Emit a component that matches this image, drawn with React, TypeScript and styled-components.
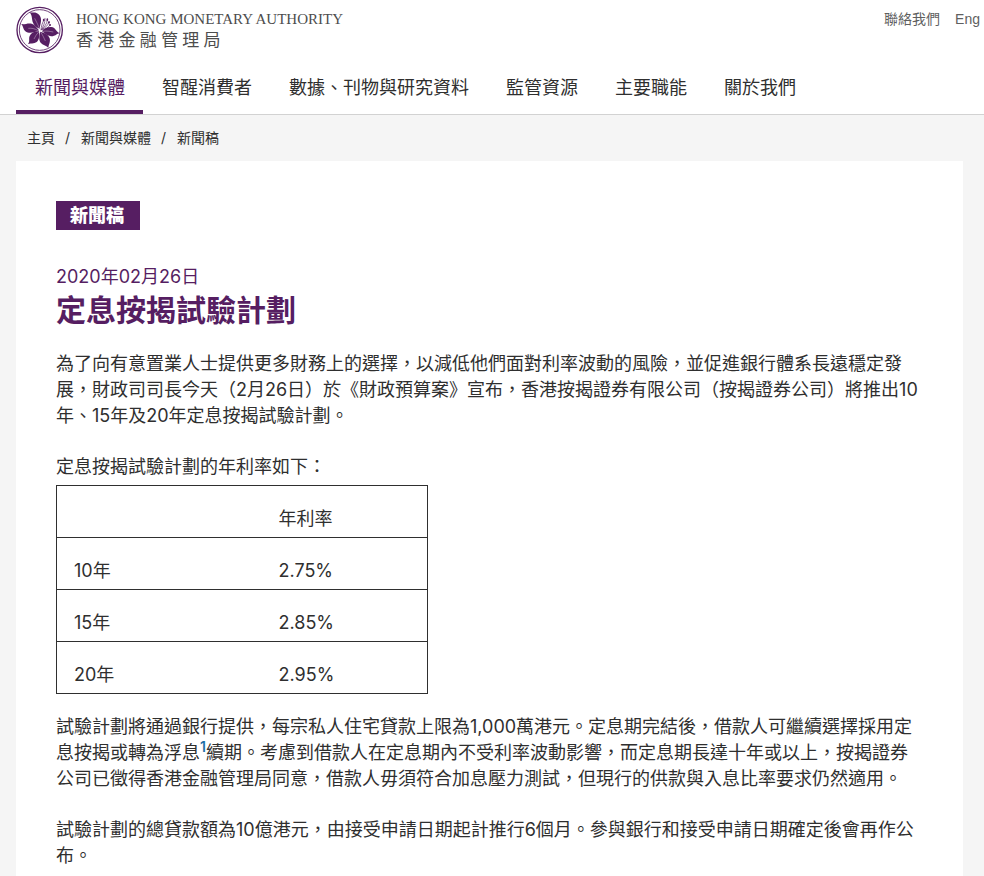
import React from 'react';
import styled, { createGlobalStyle } from 'styled-components';

const purple = '#561e62';
const ink = '#2f2f2f';

const GlobalStyle = createGlobalStyle`
  *, *::before, *::after { box-sizing: border-box; }
  body {
    margin: 0;
    background: #f5f5f5;
    color: ${ink};
    font-family: Inter, "Noto Sans CJK TC", sans-serif;
    font-size: 18px;
    line-height: 26px;
  }
  a { color: inherit; text-decoration: none; }
  h1, p { margin: 0; }
`;

const Header = styled.header`
  background: #fff;
  border-bottom: 1px solid #d2d2d2;
`;

const TopBar = styled.div`
  display: flex;
  justify-content: space-between;
  align-items: flex-start;
  padding: 6px 4px 8px 16px;
`;

const Brand = styled.a`
  display: flex;
  align-items: center;
  gap: 12px;
`;

const BrandName = styled.span`
  display: flex;
  flex-direction: column;
  gap: 2px;
  color: #4d4d4d;
  font-family: "Liberation Serif", "Noto Sans CJK TC", serif;
  font-size: 15px;
  line-height: 20px;
`;

const BrandChinese = styled.span`
  font-size: 17px;
`;

const Utility = styled.nav`
  display: flex;
  gap: 15px;
  color: #5f5f5f;
  font-family: "Liberation Sans", "Noto Sans CJK TC", sans-serif;
  font-size: 14px;
`;

const MainNav = styled.nav`
  display: flex;
  padding: 0 16px;
`;

const NavLink = styled.a<{ $active?: boolean }>`
  padding: 13px 18px 9px 19px;
  border-bottom: 4px solid ${(p) => (p.$active ? purple : 'transparent')};
  color: ${(p) => (p.$active ? purple : ink)};
`;

const Breadcrumb = styled.ol`
  display: flex;
  margin: 0;
  padding: 10px 27px;
  list-style: none;
  font-size: 14px;
  line-height: 26px;
`;

const Crumb = styled.li`
  display: flex;

  & + &::before {
    content: '/';
    margin: 0 11px 0 10px;
  }
`;

const Card = styled.main`
  margin: 0 21px 0 16px;
  padding: 40px;
  background: #fff;
`;

const Tag = styled.span`
  display: inline-block;
  padding: 0 16px 0 14px;
  background: ${purple};
  color: #fff;
  font-weight: 900;
  line-height: 29px;
  vertical-align: top;
`;

const ReleaseDate = styled.p`
  margin-top: 34px;
  color: ${purple};
`;

const Title = styled.h1`
  margin-bottom: 21px;
  color: ${purple};
  font-size: 30px;
  line-height: 40px;
`;

const Paragraph = styled.p`
  margin-bottom: 25px;
`;

const TableIntro = styled.p`
  margin-bottom: 5px;
`;

const RateTable = styled.table`
  width: 372px;
  max-width: 100%;
  margin-bottom: 20px;
  border: 1px solid ${ink};
  border-collapse: collapse;
  table-layout: fixed;
`;

const Row = styled.tr`
  border-top: 1px solid ${ink};
`;

const cell = `
  padding: 20px 17px 5px;
  font-weight: 400;
  text-align: left;
`;

const TermCell = styled.th`
  ${cell}
  width: 205px;
`;

const RateCell = styled.td`
  ${cell}
`;

const Footnote = styled.sup`
  color: #1f6fa5;
  font-size: 14px;
  font-weight: 600;
  line-height: 0;
`;

const Emblem = () => (
  <svg width="48" height="48" viewBox="0 0 144 144" aria-hidden="true">
    <g fill="none" stroke={purple}>
      <circle cx="71" cy="72" r="68" strokeWidth="4" />
      <circle cx="71" cy="72" r="61" strokeWidth="2.5" />
    </g>
    <g fill={purple}>
      <path d="M41 19c8 2 15-1 22 3 10 5 13 14 12 24-1 8-3 14-4 22-9-3-18-10-21-20-3-11-1-19-9-29z" />
      <path d="M69 73c-6-8-12-17-22-20-12-3-20 3-31 1 6 7 5 16 12 22 12 9 28 3 41-3z" />
      <path d="M69 76c-13-1-24 5-28 14-4 9 2 15-5 24 11-3 22 0 29-9 6-8 5-19 4-29z" />
      <path d="M73 77c-4 12-5 25 1 33 6 7 16 7 23 15 1-9 7-17 4-28-4-12-16-17-28-20z" />
      <path d="M78 76c6-9 17-14 28-13 12 1 13 12 25 19-9 1-14 10-26 9-12-1-19-9-27-15z" />
    </g>
    <g fill="none" stroke="#fff" strokeWidth="1">
      <path d="M70 66C65 55 61 46 56 37" />
      <path d="M65 73C56 68 47 66 37 67" />
      <path d="M68 78C62 84 58 91 54 99" />
      <path d="M75 80c6 9 9 16 13 25" />
      <path d="M81 76c11-2 20 0 31 2" />
    </g>
    <g fill="none" stroke={purple} strokeWidth="2" strokeLinecap="round">
      <path d="M75 72c1-12 3-20 9-30" />
      <path d="M76 71c5-10 12-20 11-34" />
      <path d="M78 70c6-8 15-14 16-29" />
      <path d="M79 70c8-5 17-10 19-21" />
      <path d="M80 71c9-3 17-5 22-14" />
    </g>
    <g fill={purple}>
      <ellipse cx="83" cy="42" rx="2.5" ry="4" />
      <ellipse cx="94" cy="41" rx="2.5" ry="4" />
      <ellipse cx="99" cy="49" rx="2.5" ry="4" />
      <ellipse cx="102" cy="57" rx="3" ry="3" />
    </g>
  </svg>
);

const navItems = ['新聞與媒體', '智醒消費者', '數據、刊物與研究資料', '監管資源', '主要職能', '關於我們'];

const rates = [
  { term: '10年', rate: '2.75%' },
  { term: '15年', rate: '2.85%' },
  { term: '20年', rate: '2.95%' },
];

export default function App() {
  return (
    <div lang="zh-HK">
      <GlobalStyle />
      <Header>
        <TopBar>
          <Brand href="#">
            <Emblem />
            <BrandName>
              <span>HONG KONG MONETARY AUTHORITY</span>
              <BrandChinese>香 港 金 融 管 理 局</BrandChinese>
            </BrandName>
          </Brand>
          <Utility>
            <a href="#">聯絡我們</a>
            <a href="#">Eng</a>
          </Utility>
        </TopBar>
        <MainNav>
          {navItems.map((label, i) => (
            <NavLink key={label} href="#" $active={i === 0}>
              {label}
            </NavLink>
          ))}
        </MainNav>
      </Header>
      <Breadcrumb>
        <Crumb><a href="#">主頁</a></Crumb>
        <Crumb><a href="#">新聞與媒體</a></Crumb>
        <Crumb><a href="#">新聞稿</a></Crumb>
      </Breadcrumb>
      <Card>
        <Tag>新聞稿</Tag>
        <ReleaseDate>2020年02月26日</ReleaseDate>
        <Title>定息按揭試驗計劃</Title>
        <Paragraph>
          為了向有意置業人士提供更多財務上的選擇，以減低他們面對利率波動的風險，並促進銀行體系長遠穩定發展，財政司司長今天（2月26日）於《財政預算案》宣布，香港按揭證券有限公司（按揭證券公司）將推出10年、15年及20年定息按揭試驗計劃。
        </Paragraph>
        <TableIntro>定息按揭試驗計劃的年利率如下：</TableIntro>
        <RateTable>
          <thead>
            <Row>
              <TermCell as="td" />
              <RateCell as="th" scope="col">年利率</RateCell>
            </Row>
          </thead>
          <tbody>
            {rates.map(({ term, rate }) => (
              <Row key={term}>
                <TermCell scope="row">{term}</TermCell>
                <RateCell>{rate}</RateCell>
              </Row>
            ))}
          </tbody>
        </RateTable>
        <Paragraph>
          試驗計劃將通過銀行提供，每宗私人住宅貸款上限為1,000萬港元。定息期完結後，借款人可繼續選擇採用定息按揭或轉為浮息<Footnote><a href="#">1</a></Footnote>續期。考慮到借款人在定息期內不受利率波動影響，而定息期長達十年或以上，按揭證券公司已徵得香港金融管理局同意，借款人毋須符合加息壓力測試，但現行的供款與入息比率要求仍然適用。
        </Paragraph>
        <Paragraph>
          試驗計劃的總貸款額為10億港元，由接受申請日期起計推行6個月。參與銀行和接受申請日期確定後會再作公布。
        </Paragraph>
      </Card>
    </div>
  );
}
